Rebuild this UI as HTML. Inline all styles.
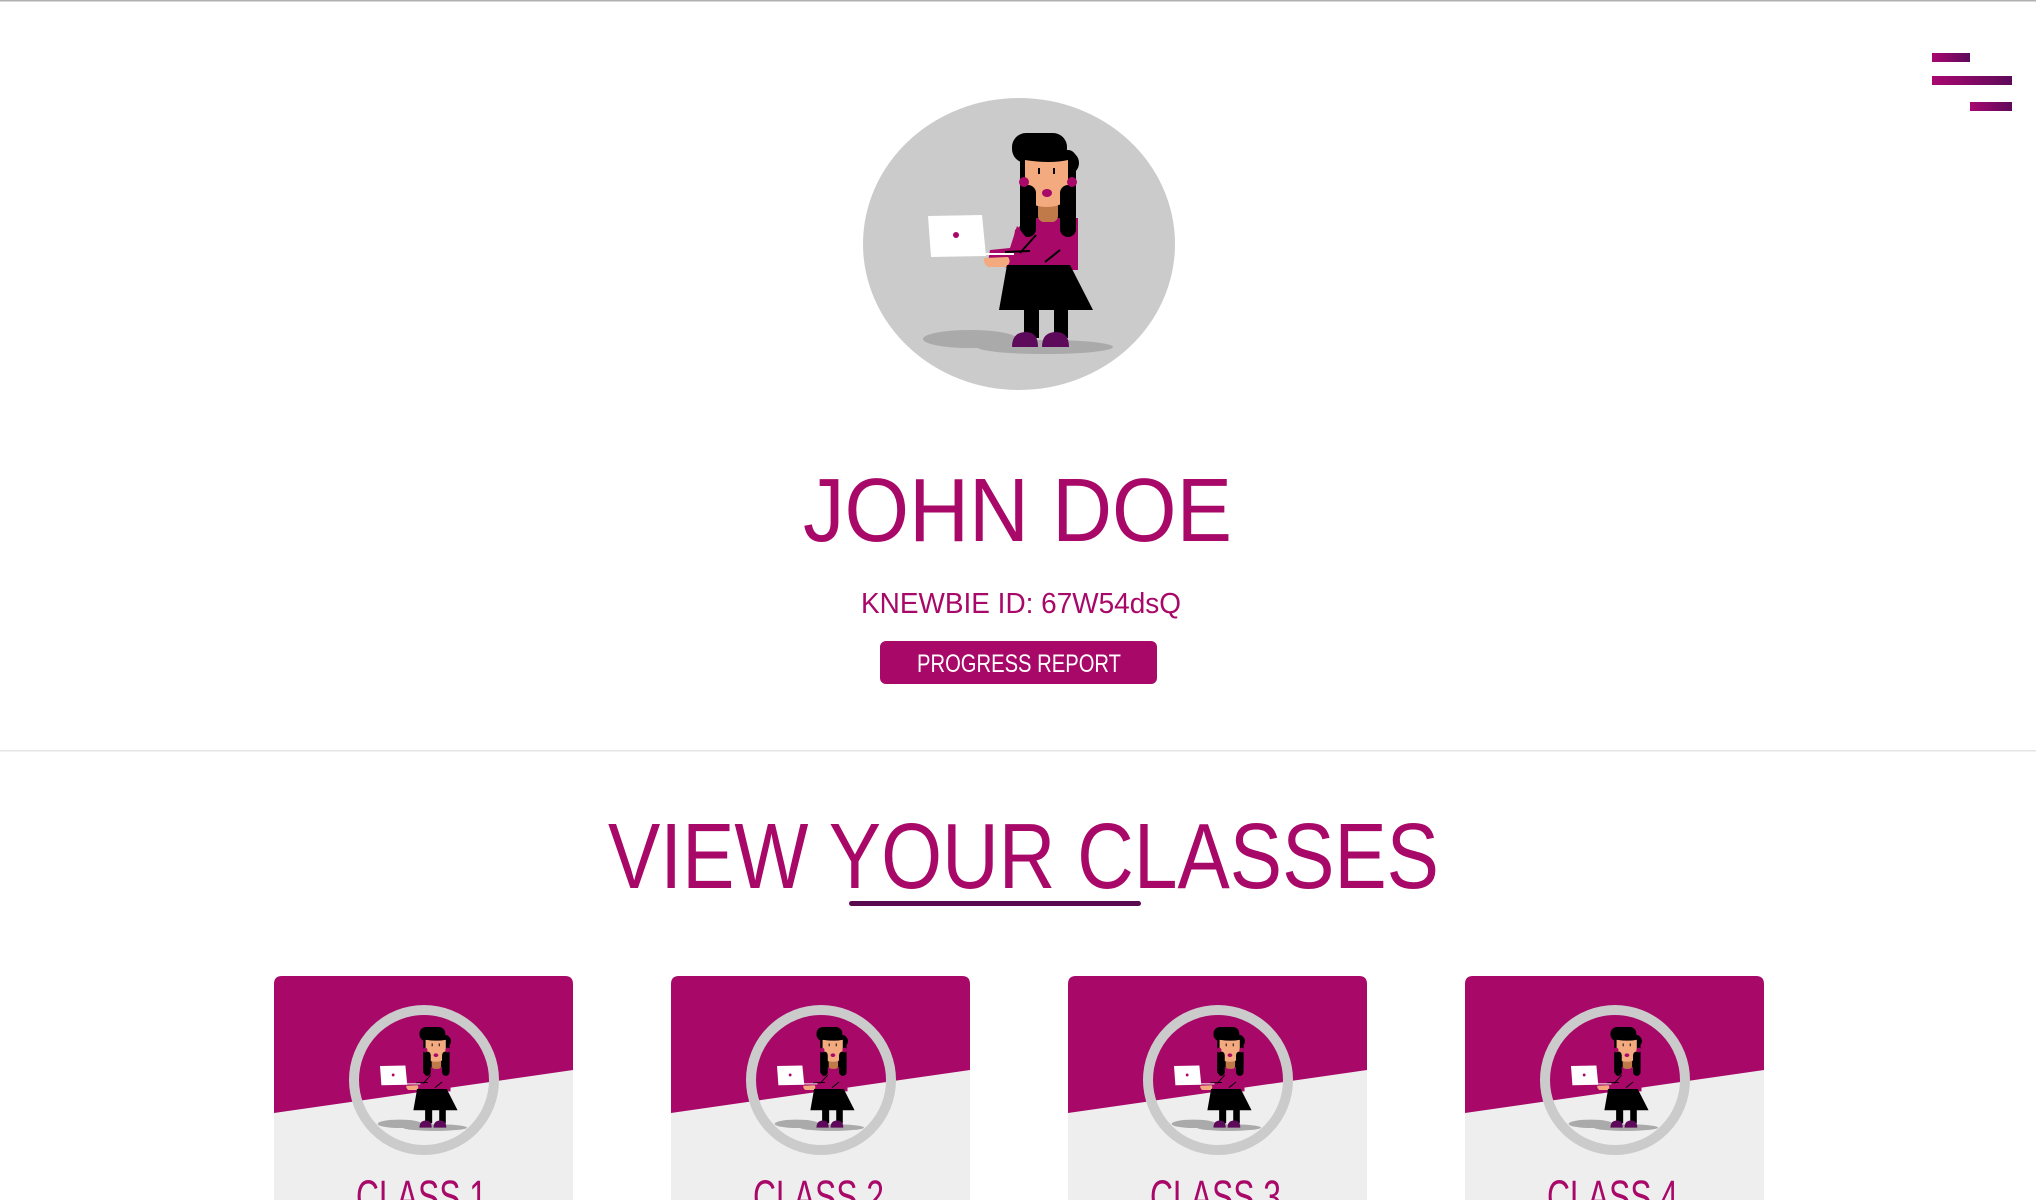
<!DOCTYPE html>
<html><head><meta charset="utf-8"><style>
html,body{margin:0;padding:0;background:#fff;width:2036px;height:1200px;overflow:hidden}
svg{display:block}
text{font-family:"Liberation Sans",sans-serif}
</style></head><body>
<svg width="2036" height="1200" viewBox="0 0 2036 1200" xmlns="http://www.w3.org/2000/svg">
<defs>
<linearGradient id="hb" x1="0" x2="1"><stop offset="0" stop-color="#a80870"/><stop offset="1" stop-color="#5e0a5a"/></linearGradient>
<g id="girl">
  <ellipse cx="970" cy="339" rx="47" ry="9" fill="#aaaaaa"/>
  <ellipse cx="1045" cy="347" rx="68" ry="7" fill="#aaaaaa"/>
  <!-- hair back -->
  <rect x="1020" y="150" width="56" height="86" rx="8" fill="#000"/>
  <rect x="1012" y="133" width="55" height="30" rx="14" fill="#000"/>
  <circle cx="1067" cy="163" r="12" fill="#000"/>
  <!-- torso -->
  <path d="M1030 218 L1078 218 L1078 270 L1010 270 L1015 230 Z" fill="#a80868"/>
  <!-- neck -->
  <rect x="1038" y="200" width="20" height="22" rx="6" fill="#c07a4a"/>
  <!-- face -->
  <path d="M1025 160 L1068 160 L1068 190 Q1068 207 1047 207 Q1025 207 1025 190 Z" fill="#f2aa7e"/>
  <path d="M1025 150 L1068 150 L1068 160 Q1050 164 1025 160 Z" fill="#000"/>
  <!-- hair strands -->
  <rect x="1020" y="185" width="16" height="52" rx="8" fill="#000"/>
  <rect x="1060" y="185" width="16" height="52" rx="8" fill="#000"/>
  <circle cx="1024" cy="182" r="5" fill="#a80868"/>
  <circle cx="1072" cy="182" r="5" fill="#a80868"/>
  <rect x="1038" y="168" width="2" height="6" fill="#000"/>
  <rect x="1053" y="168" width="2" height="6" fill="#000"/>
  <ellipse cx="1047" cy="193" rx="5" ry="4" fill="#a80868"/>
  <!-- arm -->
  <path d="M1017 226 L1036 250 L1008 268 L988 262 L990 250 L1010 248 Z" fill="#a80868"/>
  <path d="M1036 235 L1020 253 M1060 250 L1045 262 M1005 252 L1030 251" stroke="#000" stroke-width="2"/>
  <!-- laptop -->
  <path d="M928 216 L982 215 L986 256 L931 257 Z" fill="#fff"/>
  <circle cx="956" cy="235" r="3" fill="#a80868"/>
  <rect x="978" y="253" width="36" height="2" fill="#fff"/>
  <path d="M984 258 L1008 257 Q1012 262 1006 267 L988 267 Q983 263 984 258 Z" fill="#f2aa7e"/>
  <!-- skirt -->
  <path d="M1007 265 L1070 265 L1093 310 L999 310 Z" fill="#000"/>
  <rect x="1024" y="308" width="15" height="30" fill="#000"/>
  <rect x="1054" y="308" width="14" height="30" fill="#000"/>
  <path d="M1012 347 Q1012 332 1026 332 Q1038 332 1038 347 Z" fill="#5e0a5a"/>
  <path d="M1042 347 Q1042 332 1056 332 Q1069 332 1069 347 Z" fill="#5e0a5a"/>
</g>
<clipPath id="cc"><path d="M274 976 H565 Q573 976 573 984 V1200 H274 V984 Q274 976 282 976 Z"/></clipPath>
<g id="card">
  <g clip-path="url(#cc)">
    <rect x="274" y="976" width="299" height="230" fill="#eeeeee"/>
    <path d="M274 976 H573 V1070 L274 1113 Z" fill="#a80868"/>
  </g>
  <circle cx="424" cy="1080" r="70" fill="none" stroke="#cbcbcb" stroke-width="10"/>
  <g transform="translate(380 1027) scale(0.47) translate(-928 -133)"><use href="#girl"/></g>
</g>
</defs>
<rect x="0" y="0" width="2036" height="1.5" fill="#b0b0b0"/>
<rect x="1932" y="53" width="38" height="9" fill="url(#hb)"/>
<rect x="1932" y="76" width="80" height="9" fill="url(#hb)"/>
<rect x="1970" y="102" width="42" height="9" fill="url(#hb)"/>

<ellipse cx="1019" cy="244" rx="156" ry="146" fill="#cbcbcb"/>
<use href="#girl"/>

<text x="803" y="541" font-size="90" fill="#a80868" textLength="429" lengthAdjust="spacingAndGlyphs">JOHN DOE</text>
<text x="861" y="613" font-size="29" fill="#a80868" textLength="320" lengthAdjust="spacingAndGlyphs">KNEWBIE ID: 67W54dsQ</text>
<rect x="880" y="641" width="277" height="43" rx="6" fill="#a80868"/>
<text x="917" y="672" font-size="25" fill="#fff" textLength="204" lengthAdjust="spacingAndGlyphs">PROGRESS REPORT</text>

<rect x="0" y="750" width="2036" height="1.5" fill="#e4e4e4"/>

<text x="608" y="888" font-size="93" fill="#a80868" textLength="831" lengthAdjust="spacingAndGlyphs">VIEW YOUR CLASSES</text>
<rect x="849" y="901" width="292" height="5" rx="2.5" fill="#5a0a4e"/>

<use href="#card"/>
<use href="#card" x="397"/>
<use href="#card" x="794"/>
<use href="#card" x="1191"/>
<g font-size="45" fill="#a80868">
<text x="356" y="1212" textLength="131" lengthAdjust="spacingAndGlyphs">CLASS 1</text>
<text x="753" y="1212" textLength="131" lengthAdjust="spacingAndGlyphs">CLASS 2</text>
<text x="1150" y="1212" textLength="131" lengthAdjust="spacingAndGlyphs">CLASS 3</text>
<text x="1547" y="1212" textLength="131" lengthAdjust="spacingAndGlyphs">CLASS 4</text>
</g>
</svg>
</body></html>
